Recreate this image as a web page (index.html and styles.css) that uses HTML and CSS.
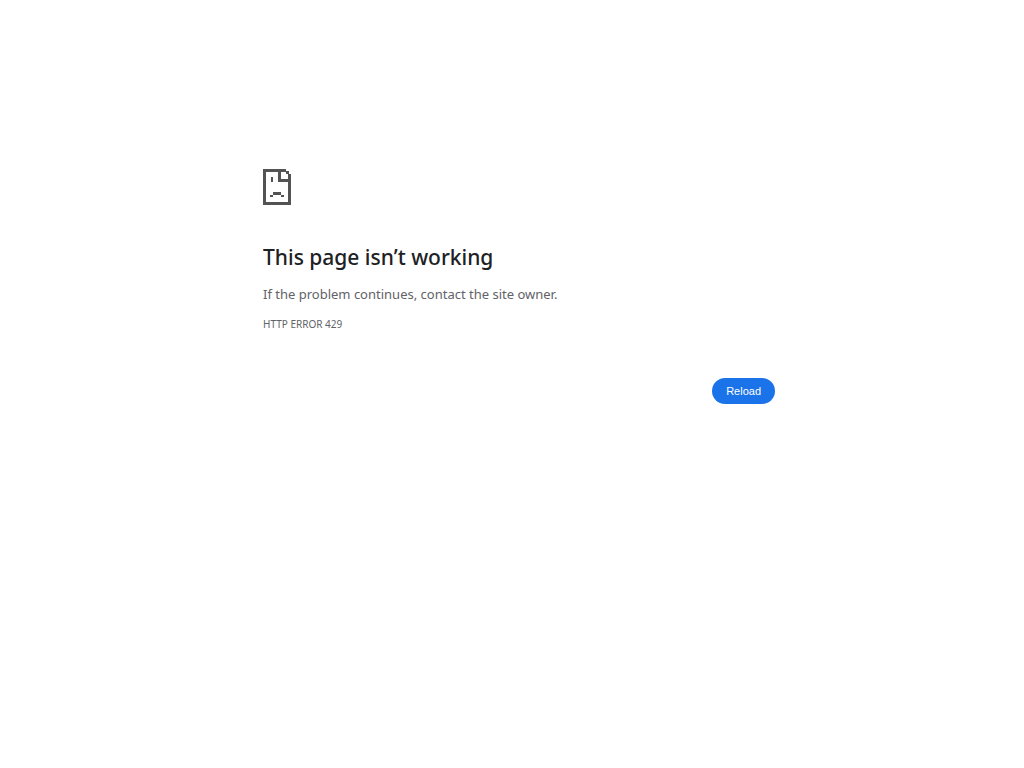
FILE: index.html
```html
<!DOCTYPE html>
<html lang="en">
<head>
<meta charset="utf-8">
<meta name="viewport" content="width=device-width, initial-scale=1">
<title>This page isn’t working</title>
<link rel="stylesheet" href="styles.css">
</head>
<body>
<main class="error-page">
  <svg class="error-icon" viewBox="0 0 28 36" aria-hidden="true">
    <path fill="#535353" fill-rule="evenodd" d="M0 0h23v2h3v3h2v31H0zM3 3v30h22V13H15V3zM18 3v7h7V5H23V3zM8 8h2v5H8zM10 23h8v3h-8zM7 26h3v2H7zM18 26h3v2h-3z"/>
  </svg>
  <h1 class="error-title">This page isn’t working</h1>
  <p class="error-summary">If the problem continues, contact the site owner.</p>
  <div class="error-code">HTTP ERROR 429</div>
  <div class="actions"><button class="reload-button" type="button">Reload</button></div>
</main>
</body>
</html>
```

FILE: styles.css
```css
body {
  margin: 0;
  padding-left: 14px;
  background: #fff;
  color: #5f6368;
  font-family: "Noto Sans", sans-serif;
  font-size: 13px;
  line-height: 24px;
}

.error-page {
  box-sizing: border-box;
  max-width: 512px;
  margin: 0 auto;
  padding-top: 169px;
}

.error-icon {
  display: block;
  width: 28px;
  height: 36px;
  margin-bottom: 40px;
}

.error-title {
  margin: 0 0 12px;
  color: #202124;
  font-size: 21px;
  font-weight: 500;
  line-height: 25px;
}

.error-summary {
  margin: 0;
}

.error-code {
  margin-top: 8px;
  font-size: 10px;
  line-height: 20px;
}

.actions {
  display: flex;
  justify-content: flex-end;
  margin-top: 44px;
}

.reload-button {
  padding: 6px 14px;
  border: 0;
  border-radius: 20px;
  background: #1a73e8;
  color: #fff;
  font-family: "Liberation Sans", Arial, sans-serif;
  font-size: 11px;
  line-height: 14px;
  cursor: pointer;
}
```
